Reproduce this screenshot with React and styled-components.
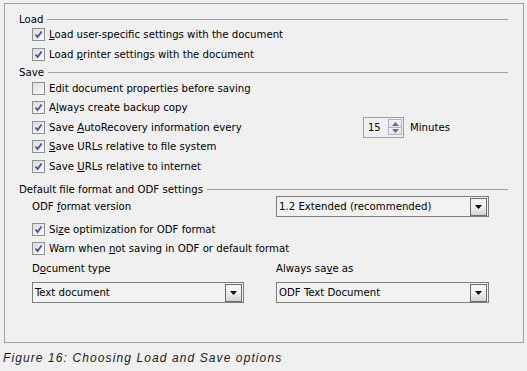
import styled, { createGlobalStyle } from 'styled-components'

const GlobalStyle = createGlobalStyle`
  body {
    margin: 0;
    background: #f0f0f0;
    font-family: "DejaVu Sans Condensed", "DejaVu Sans", sans-serif;
    font-size: 11.3px;
    color: #000;
  }
`

function Check({ checked }) {
  return (
    <Box>
      {checked && (
        <svg width='9' height='9' viewBox='0 0 9 9'>
          <path d='M1.5 4.5 L3.6 7 L7.6 1.5' fill='none' stroke='#3d55a8' strokeWidth='1.8' />
        </svg>
      )}
    </Box>
  )
}

function CheckRow({ checked = true, children }) {
  return (
    <Row>
      <Check checked={checked} />
      <span>{children}</span>
    </Row>
  )
}

function Dropdown({ value, narrow }) {
  return (
    <Select narrow={narrow}>
      <SelectValue>{value}</SelectValue>
      <ArrowButton>
        <svg width='7' height='4' viewBox='0 0 7 4'>
          <path d='M0 0 H7 L3.5 4 Z' fill='#000' />
        </svg>
      </ArrowButton>
    </Select>
  )
}

export default function App() {
  return (
    <Page>
      <GlobalStyle />
      <Panel>
        <SectionHeader>
          <span>Load</span>
          <Rule />
        </SectionHeader>
        <CheckRow>
          <u>L</u>oad user-specific settings with the document
        </CheckRow>
        <CheckRow>
          Load <u>p</u>rinter settings with the document
        </CheckRow>

        <SectionHeader gap={2.5}>
          <span>Save</span>
          <Rule />
        </SectionHeader>
        <CheckRow checked={false}>Edit document properties before saving</CheckRow>
        <CheckRow>
          A<u>l</u>ways create backup copy
        </CheckRow>
        <Row>
          <CheckCell>
            <Check checked />
            <span>
              Save <u>A</u>utoRecovery information every
            </span>
          </CheckCell>
          <Spin>
            <SpinValue>15</SpinValue>
            <SpinButtons>
              <SpinHalf>
                <svg width='7' height='4' viewBox='0 0 7 4'>
                  <path d='M0 4 H7 L3.5 0 Z' fill='#5a6ea8' />
                </svg>
              </SpinHalf>
              <SpinHalf>
                <svg width='7' height='4' viewBox='0 0 7 4'>
                  <path d='M0 0 H7 L3.5 4 Z' fill='#5a6ea8' />
                </svg>
              </SpinHalf>
            </SpinButtons>
          </Spin>
          <span>Minutes</span>
        </Row>
        <CheckRow>
          <u>S</u>ave URLs relative to file system
        </CheckRow>
        <CheckRow>
          Save <u>U</u>RLs relative to internet
        </CheckRow>

        <SectionHeader gap={7}>
          <span>Default file format and ODF settings</span>
          <Rule />
        </SectionHeader>
        <TwoCol top={1}>
          <span>
            ODF <u>f</u>ormat version
          </span>
          <Dropdown value='1.2 Extended (recommended)' />
        </TwoCol>
        <Spacer />
        <CheckRow>
          Si<u>z</u>e optimization for ODF format
        </CheckRow>
        <CheckRow>
          Warn when <u>n</u>ot saving in ODF or default format
        </CheckRow>
        <TwoCol>
          <span>
            D<u>o</u>cument type
          </span>
          <span>
            Always sa<u>v</u>e as
          </span>
        </TwoCol>
        <TwoCol top={4}>
          <Dropdown value='Text document' narrow />
          <Dropdown value='ODF Text Document' />
        </TwoCol>
      </Panel>
      <Caption>Figure 16: Choosing Load and Save options</Caption>
    </Page>
  )
}

const Page = styled.div`
  width: 527px;
  height: 371px;
  padding: 3px 0 0 4px;
  box-sizing: border-box;
  overflow: hidden;
`

const Panel = styled.div`
  width: 520px;
  height: 340px;
  box-sizing: border-box;
  border: 1px solid #a2a2a2;
  padding: 9px 15px 0 14px;
`

const SectionHeader = styled.div`
  display: flex;
  align-items: center;
  gap: 4px;
  height: 12px;
  margin-top: ${p => p.gap || 0}px;
  white-space: nowrap;
`

const Rule = styled.div`
  flex: 1;
  height: 1px;
  background: #a0a0a0;
`

const Row = styled.div`
  display: flex;
  align-items: center;
  gap: 4px;
  height: 19.5px;
  padding-left: 13px;
  white-space: nowrap;
`

const CheckCell = styled.div`
  display: flex;
  align-items: center;
  gap: 4px;
  flex: 0 0 327px;
`

const Box = styled.span`
  display: flex;
  align-items: center;
  justify-content: center;
  width: 13px;
  height: 13px;
  box-sizing: border-box;
  border: 1px solid #8e8f8f;
  background: linear-gradient(135deg, #dcdcdc, #fbfbfb);
  flex: none;
`

const Spin = styled.div`
  display: flex;
  align-items: center;
  justify-content: space-between;
  width: 41px;
  height: 21px;
  box-sizing: border-box;
  border: 1px solid #a0a0a0;
  padding: 0 1px 0 4px;
  margin-right: 2px;
`

const SpinValue = styled.span`
  font-size: 11px;
`

const SpinButtons = styled.div`
  display: flex;
  flex-direction: column;
  width: 14px;
  height: 16px;
  border: 1px solid #b4b4b4;
  box-sizing: border-box;
`

const SpinHalf = styled.div`
  flex: 1;
  display: flex;
  align-items: center;
  justify-content: center;
  background: linear-gradient(#f4f4f4, #e2e2e2);
  & + & {
    border-top: 1px solid #b4b4b4;
  }
`

const Spacer = styled.div`
  height: 2.5px;
`

const TwoCol = styled.div`
  display: grid;
  grid-template-columns: 244px 213px;
  align-items: center;
  min-height: 19.5px;
  padding-left: 13px;
  margin-top: ${p => p.top || 0}px;
  white-space: nowrap;
`

const Select = styled.div`
  display: flex;
  align-items: center;
  width: ${p => (p.narrow ? '212px' : 'auto')};
  height: 21px;
  box-sizing: border-box;
  border: 1px solid #7d7d7d;
  background: #f2f2f2;
  padding: 0 1px 0 2px;
`

const SelectValue = styled.span`
  flex: 1;
`

const ArrowButton = styled.span`
  display: flex;
  justify-content: center;
  padding-top: 6px;
  width: 17px;
  height: 18px;
  box-sizing: border-box;
  border: 1px solid #6b6b6b;
  background: linear-gradient(#f6f6f6 40%, #d2d2d2);
`

const Caption = styled.div`
  margin: 8px 0 0 -1px;
  font-family: "Liberation Sans", Arial, sans-serif;
  font-style: italic;
  font-size: 12px;
  letter-spacing: 1.1px;
  color: #222;
`
